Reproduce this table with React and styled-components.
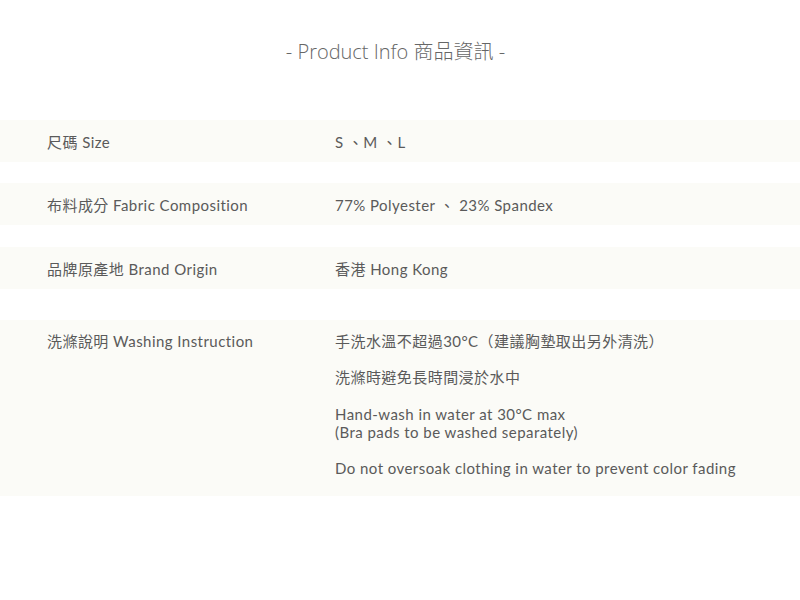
import React from "react";
import styled, { createGlobalStyle } from "styled-components";

const Global = createGlobalStyle`
  html, body { margin: 0; padding: 0; background: #ffffff; }
  body { font-family: Lato, "Noto Sans CJK TC", sans-serif; color: #5a5a5a; }
`;

const Page = styled.div`
  width: 800px;
  padding-top: 39px;
`;

const Title = styled.h2`
  margin: 0 0 55px;
  text-align: center;
  font-family: "Open Sans", "Noto Sans CJK TC", sans-serif;
  font-weight: 300;
  font-size: 20px;
  line-height: 26px;
  color: #666666;
  padding-right: 9px;
`;

const Table = styled.div`
  display: flex;
  flex-direction: column;
`;

const Row = styled.div`
  display: grid;
  grid-template-columns: 288px 1fr;
  align-items: ${(p) => (p.$top ? "start" : "center")};
  min-height: 42px;
  box-sizing: border-box;
  padding: ${(p) => (p.$top ? "11px 0 19px 47px" : "2px 0 0 47px")};
  margin-bottom: ${(p) => p.$gap || 0}px;
  background: #fbfbf7;
  font-size: 15px;
  line-height: 20px;
  letter-spacing: 0.45px;
  color: #5a5a5a;
`;

const Label = styled.div``;

const Value = styled.div`
  display: flex;
  flex-direction: column;
`;

const Para = styled.p`
  margin: 0 0 ${(p) => p.$mb || 0}px;
  line-height: ${(p) => p.$lh || 20}px;
`;

export default function App() {
  return (
    <Page>
      <Global />
      <Title>- Product Info 商品資訊 -</Title>
      <Table>
        <Row $gap={21}>
          <Label>尺碼 Size</Label>
          <Value>S 、M 、L</Value>
        </Row>
        <Row $gap={22}>
          <Label>布料成分 Fabric Composition</Label>
          <Value>77% Polyester 、 23% Spandex</Value>
        </Row>
        <Row $gap={31}>
          <Label>品牌原產地 Brand Origin</Label>
          <Value>香港 Hong Kong</Value>
        </Row>
        <Row $top>
          <Label>洗滌說明 Washing Instruction</Label>
          <Value>
            <Para $mb={16}>手洗水溫不超過30°C（建議胸墊取出另外清洗）</Para>
            <Para $mb={18}>洗滌時避免長時間浸於水中</Para>
            <Para $lh={18} $mb={18}>
              Hand-wash in water at 30°C max
              <br />
              (Bra pads to be washed separately)
            </Para>
            <Para $lh={18}>Do not oversoak clothing in water to prevent color fading</Para>
          </Value>
        </Row>
      </Table>
    </Page>
  );
}
